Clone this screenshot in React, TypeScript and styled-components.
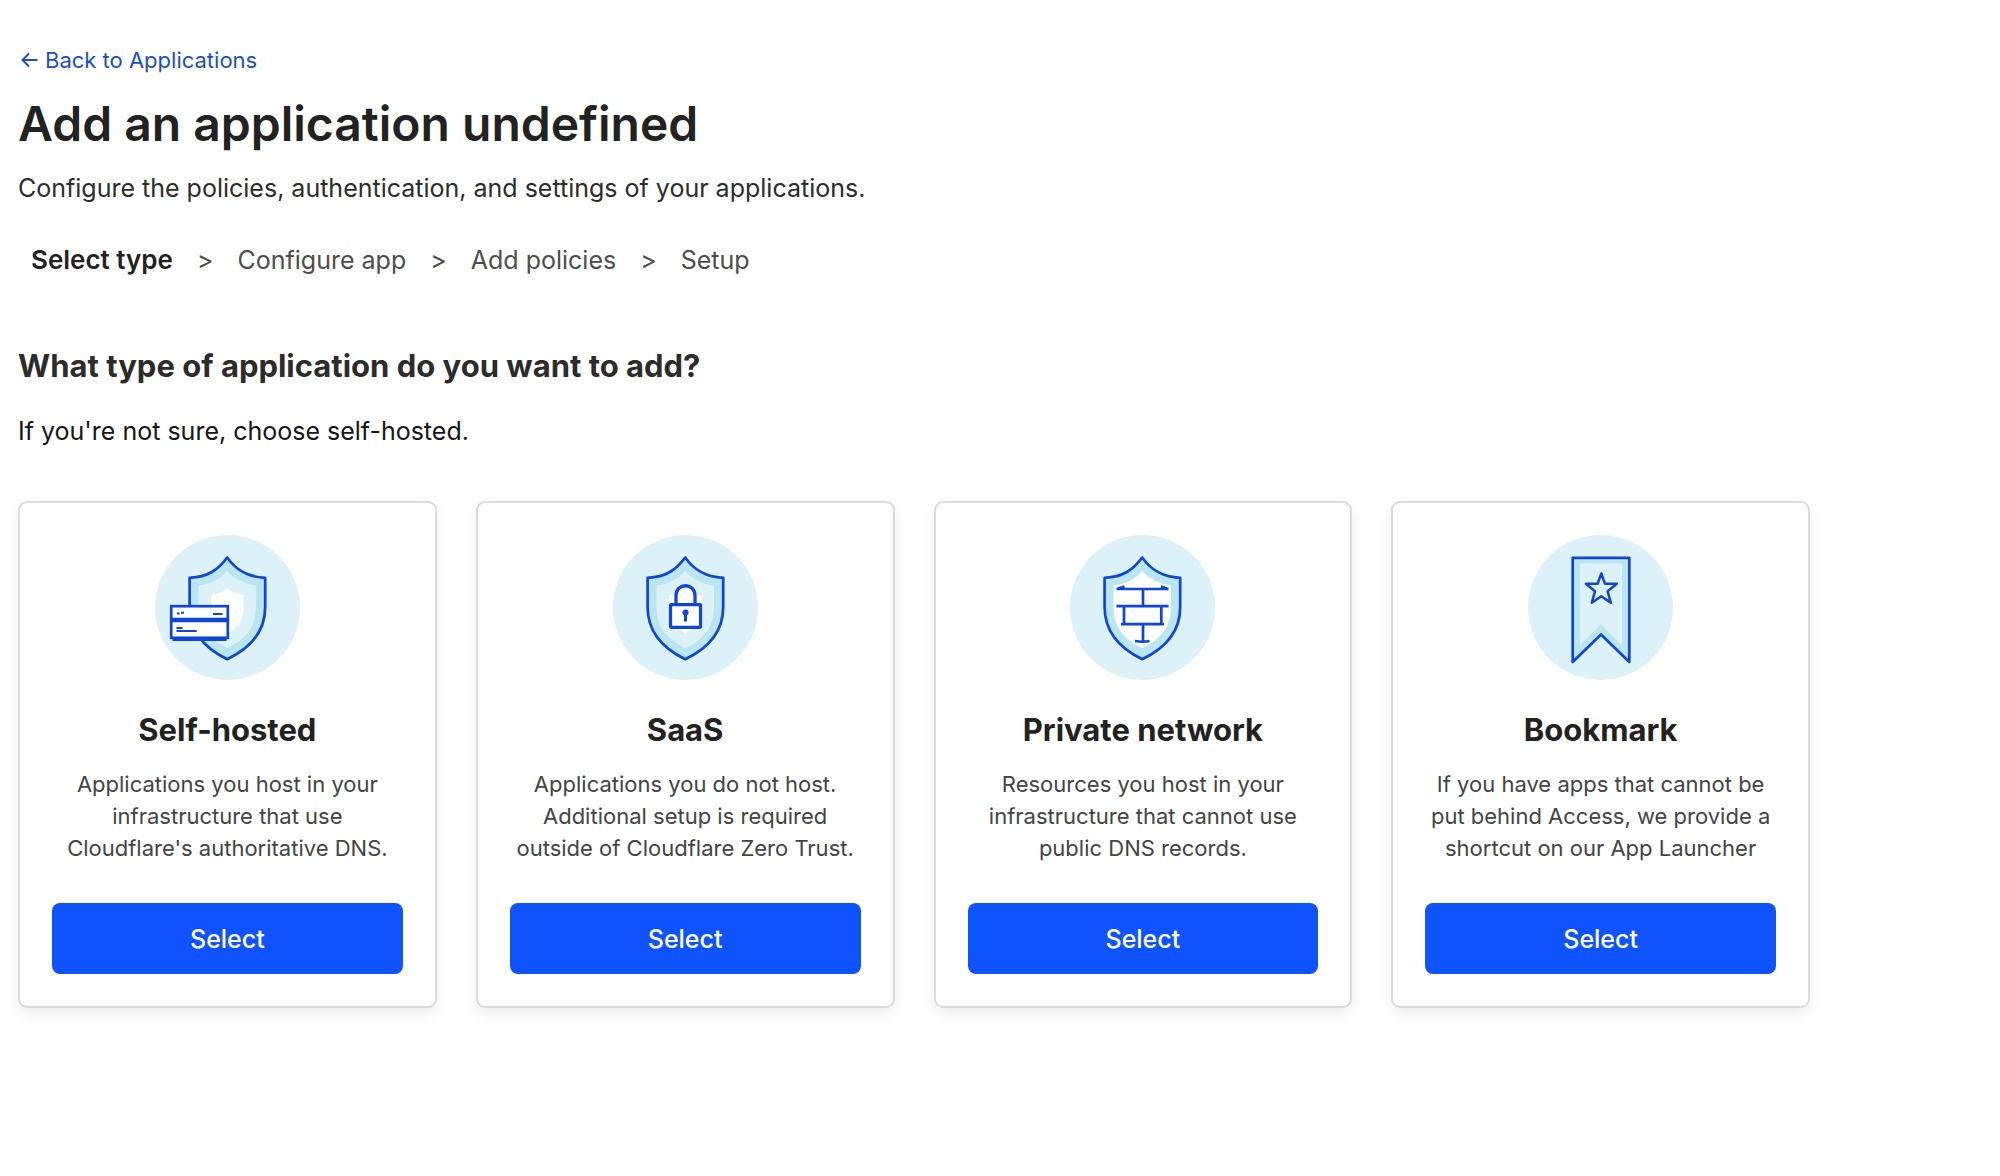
import React from "react";
import styled, { createGlobalStyle } from "styled-components";

const GlobalStyle = createGlobalStyle`
  *, *::before, *::after { box-sizing: border-box; }
  body {
    margin: 0;
    background: #ffffff;
    color: #222222;
    font-family: Inter, "Liberation Sans", sans-serif;
  }
  h1, h2, h3, p, ol { margin: 0; padding: 0; }
`;

const Page = styled.main`
  max-width: 1828px;
  padding: 44px 18px;
`;

const BackLink = styled.a`
  display: inline-flex;
  align-items: center;
  gap: 7px;
  padding-left: 3px;
  color: #1a4fc9;
  font-size: 22px;
  line-height: 32px;
  text-decoration: none;
`;

const Title = styled.h1`
  margin-top: 18px;
  color: #222222;
  font-size: 48px;
  font-weight: 600;
  line-height: 60px;
`;

const Lead = styled.p`
  margin-top: 14px;
  color: #2c2c2c;
  font-size: 25px;
  line-height: 40px;
`;

const Steps = styled.ol`
  display: flex;
  flex-wrap: wrap;
  margin-top: 32px;
  padding-left: 13px;
  list-style: none;
`;

const Step = styled.li<{ $current?: boolean }>`
  color: ${(p) => (p.$current ? "#222222" : "#4d4d4d")};
  font-size: ${(p) => (p.$current ? "26px" : "25px")};
  font-weight: ${(p) => (p.$current ? 600 : 400)};
  line-height: 40px;

  &:not(:last-child)::after {
    content: ">";
    margin: 0 24px;
    color: #4d4d4d;
    font-size: 25px;
    font-weight: 400;
  }
`;

const Question = styled.h2`
  margin-top: 66px;
  color: #2c2c2c;
  font-size: 31px;
  font-weight: 700;
  line-height: 40px;
`;

const Hint = styled.p`
  margin-top: 25px;
  color: #161616;
  font-size: 25px;
  line-height: 40px;
`;

const CardGrid = styled.section`
  display: grid;
  grid-template-columns: repeat(4, minmax(0, 1fr));
  gap: 39px;
  margin-top: 50px;

  @media (max-width: 1400px) {
    grid-template-columns: repeat(auto-fit, minmax(360px, 1fr));
  }
`;

const Card = styled.article`
  display: flex;
  flex-direction: column;
  align-items: center;
  padding: 32px;
  border: 2px solid #dbdbdb;
  border-radius: 9px;
  background: #ffffff;
  box-shadow: 0 6px 14px rgba(0, 0, 0, 0.07);
  text-align: center;
`;

const CardTitle = styled.h3`
  margin-top: 30px;
  color: #222222;
  font-size: 31px;
  font-weight: 700;
  line-height: 40px;
`;

const CardText = styled.p`
  flex: 1;
  max-width: 344px;
  margin: 18px 0 39px;
  color: #444444;
  font-size: 22px;
  line-height: 32px;
`;

const SelectButton = styled.button`
  width: 100%;
  height: 71px;
  border: 0;
  border-radius: 8px;
  background: #0f52ff;
  color: #ffffff;
  font-family: inherit;
  font-size: 25px;
  font-weight: 500;
  cursor: pointer;

  &:hover { background: #0a45dc; }
`;

const BLUE = "#0f45d8";
const BAND = "#b9e6f1";
const PALE = "#dcf1f8";

const Badge = ({ children }: { children: React.ReactNode }) => (
  <svg width="145" height="145" viewBox="0 0 145 145" fill="none" aria-hidden="true">
    <circle cx="72.5" cy="72.5" r="72.5" fill={PALE} />
    {children}
  </svg>
);

const Shield = ({ inner }: { inner: string }) => (
  <>
    <path
      d="M72.2 22.5C63 35 53 42 34.6 42.8V72C34.6 96 49 113 72.2 124.2C96 113 110.2 96 110.2 72V42.8C92 42 81 35 72.2 22.5Z"
      fill={BAND}
      stroke={BLUE}
      strokeWidth="2.7"
      strokeLinejoin="round"
    />
    <path
      d="M72.2 36C65 44 56 49 43.5 50.5V72C43.5 91 53 104 72.2 113C92 104 101 91 101 72V50.5C89 49 80 44 72.2 36Z"
      fill={inner}
    />
  </>
);

const Core = () => (
  <path d="M72.2 53C68 57 63 59.5 56 60V73C56 85 62 93 72.2 98.5C83 93 88.5 85 88.5 73V60C82 59.5 77 57 72.2 53Z" fill="#fff" />
);

const SelfHostedIcon = () => (
  <Badge>
    <Shield inner={PALE} />
    <Core />
    <path d="M17.5 104.5H71.5" stroke={BLUE} strokeWidth="3" />
    <rect x="16.2" y="71.2" width="56.6" height="31.6" fill="#fff" stroke={BLUE} strokeWidth="2.7" />
    <path d="M16 85H73" stroke={BLUE} strokeWidth="4.4" />
    <path d="M22 78.5H24.5M26 77.8H29M58 79H67.5M21.5 93H27.5M21.5 96H41.7" stroke={BLUE} strokeWidth="1.9" />
  </Badge>
);

const SaasIcon = () => (
  <Badge>
    <Shield inner={PALE} />
    <Core />
    <path d="M63 69V60.5C63 47.5 82 47.5 82 60.5V69" fill="#fff" stroke={BLUE} strokeWidth="3.3" />
    <rect x="57.5" y="69.7" width="30" height="22.6" rx="0.5" fill="#fff" stroke={BLUE} strokeWidth="3.2" />
    <circle cx="72.5" cy="77.5" r="3.1" fill={BLUE} />
    <path d="M72.5 78V86.5" stroke={BLUE} strokeWidth="3" />
  </Badge>
);

const NetworkIcon = () => (
  <Badge>
    <Shield inner="#fff" />
    <path
      d="M46.5 54H98.5M46.5 71.2H98.5M51 89.2H94M73 54V71M54 71V89M91.3 71V89M73 89V106M65 106Q73 107.5 79.5 106M48 53.5L54.5 51.5M97 53.5L91 51.5"
      stroke={BLUE}
      strokeWidth="2.7"
    />
  </Badge>
);

const BookmarkIcon = () => (
  <Badge>
    <path
      d="M44.7 22.8H101.3V127L73 99.5L44.7 127Z"
      fill={BAND}
      stroke={BLUE}
      strokeWidth="2.7"
      strokeLinejoin="round"
    />
    <path d="M52 28.5H94V110.5L73 89.5L52 110.5Z" fill={PALE} />
    <path
      d="M73.3 38.5L77 48.8H88.8L79.6 56.2L82.8 67.8L73.3 61.2L63.8 67.8L67 56.2L57.8 48.8H69.6Z"
      stroke={BLUE}
      strokeWidth="2.5"
      strokeLinejoin="round"
    />
  </Badge>
);

const steps = ["Select type", "Configure app", "Add policies", "Setup"];

const appTypes = [
  {
    name: "Self-hosted",
    text: "Applications you host in your infrastructure that use Cloudflare's authoritative DNS.",
    Icon: SelfHostedIcon,
  },
  {
    name: "SaaS",
    text: "Applications you do not host. Additional setup is required outside of Cloudflare Zero Trust.",
    Icon: SaasIcon,
  },
  {
    name: "Private network",
    text: "Resources you host in your infrastructure that cannot use public DNS records.",
    Icon: NetworkIcon,
  },
  {
    name: "Bookmark",
    text: "If you have apps that cannot be put behind Access, we provide a shortcut on our App Launcher",
    Icon: BookmarkIcon,
  },
];

export default function App() {
  return (
    <>
      <GlobalStyle />
      <Page>
        <BackLink href="#applications">
          <svg width="17" height="16" viewBox="0 0 17 16" fill="none" aria-hidden="true">
            <path d="M16.5 8H2M8 1.5L1.5 8L8 14.5" stroke="currentColor" strokeWidth="2" />
          </svg>
          Back to Applications
        </BackLink>
        <Title>Add an application undefined</Title>
        <Lead>Configure the policies, authentication, and settings of your applications.</Lead>
        <Steps>
          {steps.map((step, i) => (
            <Step key={step} $current={i === 0} aria-current={i === 0 ? "step" : undefined}>
              {step}
            </Step>
          ))}
        </Steps>
        <Question>What type of application do you want to add?</Question>
        <Hint>If you're not sure, choose self-hosted.</Hint>
        <CardGrid>
          {appTypes.map(({ name, text, Icon }) => (
            <Card key={name}>
              <Icon />
              <CardTitle>{name}</CardTitle>
              <CardText>{text}</CardText>
              <SelectButton type="button" aria-label={`Select ${name}`}>
                Select
              </SelectButton>
            </Card>
          ))}
        </CardGrid>
      </Page>
    </>
  );
}
